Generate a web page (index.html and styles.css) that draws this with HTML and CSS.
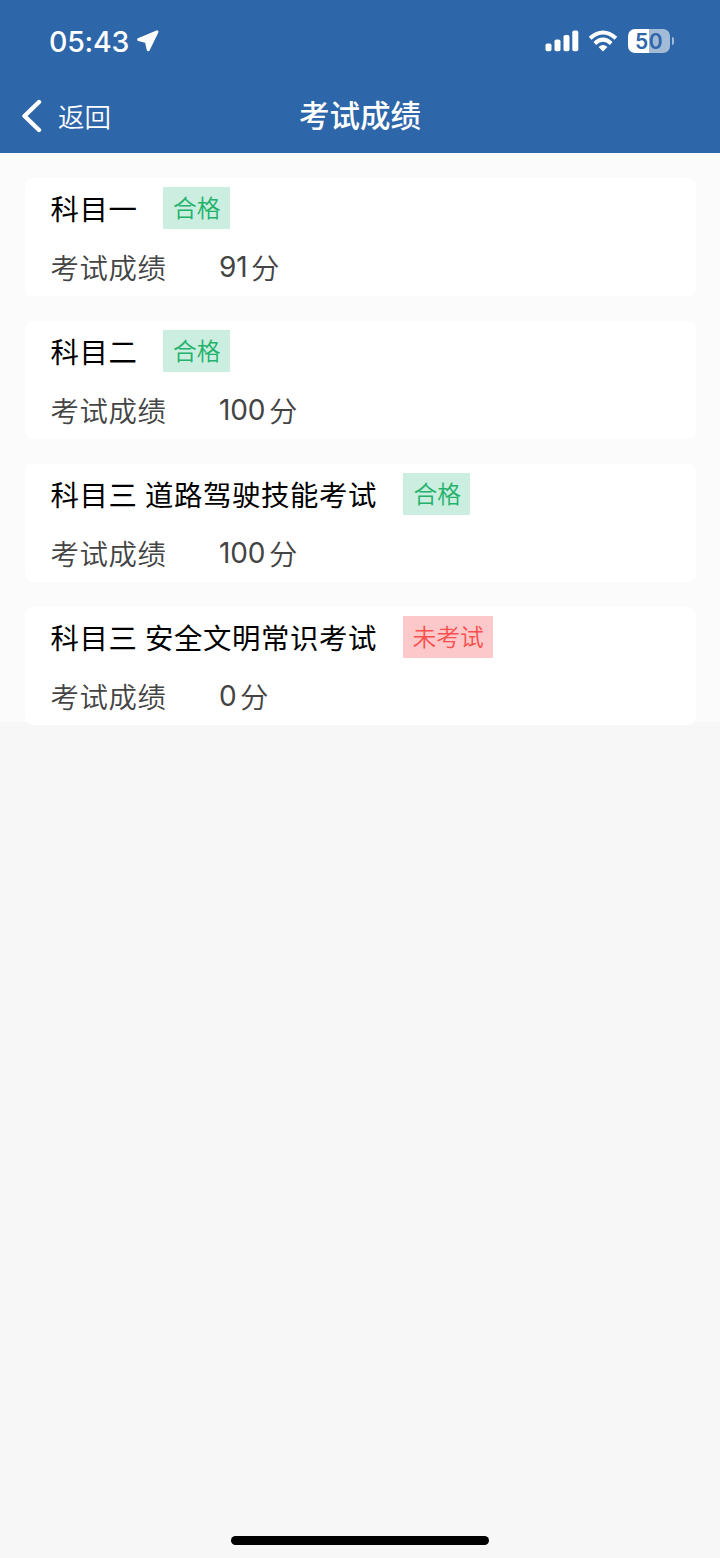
FILE: index.html
```html
<!DOCTYPE html>
<html lang="zh-CN">
<head>
	<meta charset="utf-8">
	<title>考试成绩</title>
	<link rel="stylesheet" href="styles.css">
</head>
<body>
	<header class="header">
		<div class="status">
			<span class="time">05:43</span>
			<svg class="location" width="24" height="24" viewBox="0 0 24 24">
				<path d="M21 2.8L2.6 10.6L10.4 12.6L12.2 20.8Z" fill="#fff" stroke="#fff" stroke-width="3" stroke-linejoin="round"/>
			</svg>
			<svg class="signal" width="34" height="22" viewBox="0 0 34 22">
				<g fill="#fff">
					<rect x="0.5" y="13.5" width="6" height="7.8" rx="1.8"/>
					<rect x="9.5" y="9.5" width="6" height="11.8" rx="1.8"/>
					<rect x="18.5" y="5" width="6" height="16.3" rx="1.8"/>
					<rect x="27.3" y="0.5" width="6" height="20.8" rx="1.8"/>
				</g>
			</svg>
			<svg class="wifi" width="30" height="22" viewBox="0 0 30 22">
				<g fill="none" stroke="#fff" stroke-width="4">
					<path d="M2.1 8.2Q15 -3.2 27.9 8.2"/>
					<path d="M6.8 13.4Q15 6 23.2 13.4"/>
				</g>
				<path d="M10.6 17Q15 13.2 19.4 17L15 21.4Z" fill="#fff"/>
			</svg>
			<div class="battery">50</div>
			<div class="battery-cap"></div>
		</div>
		<div class="nav">
			<div class="back">
				<svg width="22" height="34" viewBox="0 0 22 34">
					<path d="M19 3L4.5 17L19 31" fill="none" stroke="#fff" stroke-width="4.4" stroke-linecap="round" stroke-linejoin="round"/>
				</svg>
				<span>返回</span>
			</div>
			<div class="title">考试成绩</div>
		</div>
	</header>
	<div class="list">
		<div class="card">
			<div class="subject"><span class="name">科目一</span><span class="tag pass">合格</span></div>
			<div class="score"><span class="label">考试成绩</span><span class="num">91</span><span class="unit">分</span></div>
		</div>
		<div class="card">
			<div class="subject"><span class="name">科目二</span><span class="tag pass">合格</span></div>
			<div class="score"><span class="label">考试成绩</span><span class="num">100</span><span class="unit">分</span></div>
		</div>
		<div class="card">
			<div class="subject"><span class="name long">科目三 道路驾驶技能考试</span><span class="tag pass">合格</span></div>
			<div class="score"><span class="label">考试成绩</span><span class="num">100</span><span class="unit">分</span></div>
		</div>
		<div class="card">
			<div class="subject"><span class="name long">科目三 安全文明常识考试</span><span class="tag none">未考试</span></div>
			<div class="score"><span class="label">考试成绩</span><span class="num">0</span><span class="unit">分</span></div>
		</div>
	</div>
	<div class="home-bar"></div>
</body>
</html>
```
FILE: styles.css
```css
*{
	box-sizing: border-box;
}
body{
	margin: 0;
	height: 1558px;
	display: flex;
	flex-direction: column;
	background-color: #f7f7f7;
	font-family: Inter, "Noto Sans CJK SC", sans-serif;
}
svg{
	display: block;
}
.header{
	height: 153px;
	background-color: #2d66a9;
	color: #fff;
}
.status{
	display: flex;
	align-items: center;
	height: 80px;
	padding: 2px 46px 0 49px;
}
.time{
	width: 87px;
	font-size: 28.5px;
	font-weight: 500;
	letter-spacing: -0.2px;
}
.signal{
	margin-left: auto;
}
.wifi{
	margin: 0 10px 0 9px;
}
.battery{
	width: 42px;
	height: 24px;
	border-radius: 7px;
	background: linear-gradient(to right, #fff 50%, #a4bbd8 50%);
	color: #2d66a9;
	font-size: 21px;
	font-weight: 600;
	line-height: 25px;
	letter-spacing: 0.5px;
	text-align: center;
}
.battery-cap{
	width: 2px;
	height: 8px;
	margin-left: 2px;
	border-radius: 0 3px 3px 0;
	background-color: #a4bbd8;
}
.nav{
	display: grid;
	grid-template-columns: 1fr auto 1fr;
	align-items: center;
	height: 72px;
	padding: 0 20px;
}
.back{
	display: flex;
	align-items: center;
	gap: 16px;
	font-size: 26.5px;
	font-weight: 350;
}
.back span{
	padding-bottom: 2px;
}
.title{
	padding-bottom: 4px;
	font-size: 30.5px;
	font-weight: 500;
}
.list{
	height: 569px;
	padding: 25px 24px 0 25px;
	background-color: #fbfbfb;
}
.card{
	height: 118px;
	margin-bottom: 25px;
	padding: 9px 25.5px 0;
	border-radius: 8px;
	background-color: #fff;
}
.subject{
	display: flex;
	align-items: center;
	height: 42px;
	color: #000;
	font-size: 28.4px;
	white-space: nowrap;
}
.name{
	padding-bottom: 2px;
	letter-spacing: 0.6px;
	word-spacing: -1px;
}
.long{
	padding-right: 1px;
}
.tag{
	height: 42px;
	margin-left: 25.5px;
	padding: 0 9px 0 10px;
	font-size: 23.8px;
	font-weight: 350;
	line-height: 43px;
}
.pass{
	background-color: #cceee0;
	color: #23b26b;
}
.none{
	padding: 0 9px;
	background-color: #fcc8ca;
	color: #f9504f;
}
.score{
	display: flex;
	align-items: center;
	height: 42px;
	margin-top: 17px;
	color: #444;
	font-size: 28.4px;
	font-weight: 350;
}
.label{
	width: 168.5px;
	padding-bottom: 2px;
	letter-spacing: 0.6px;
}
.num{
	margin-right: 3.5px;
	font-size: 28px;
	font-weight: 400;
	letter-spacing: -0.1px;
}
.unit{
	padding-bottom: 2px;
}
.home-bar{
	width: 258px;
	height: 9px;
	margin: auto auto 13px;
	border-radius: 5px;
	background-color: #000;
}
```
